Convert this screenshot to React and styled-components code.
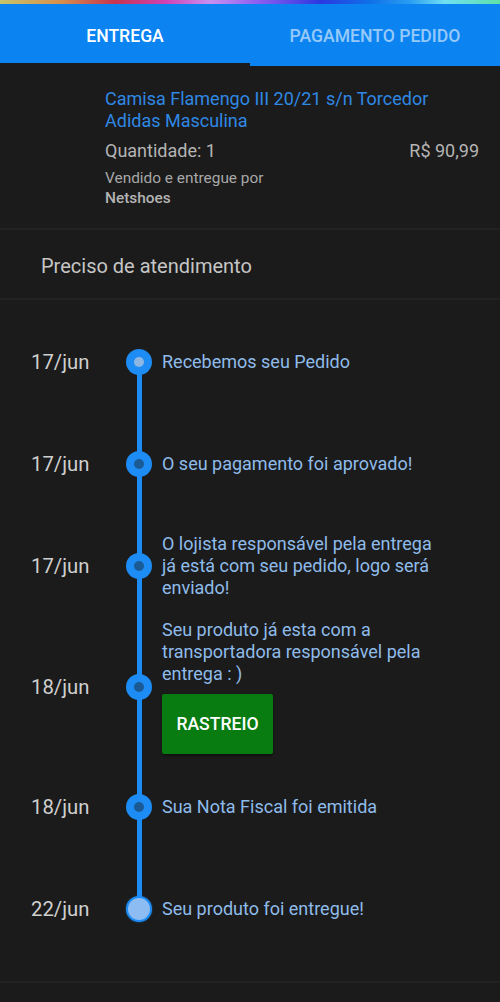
import React from 'react';
import styled, { createGlobalStyle } from 'styled-components';

const Global = createGlobalStyle`
  html, body { margin: 0; padding: 0; background: #1b1b1b; }
  body { font-family: Roboto, "Noto Sans", "Liberation Sans", sans-serif; -webkit-font-smoothing: antialiased; }
  * { box-sizing: border-box; }
`;

const Page = styled.div`
  width: 500px;
  min-height: 1002px;
  background: #1b1b1b;
  display: flex;
  flex-direction: column;
`;

const Rainbow = styled.div`
  height: 4px;
  background: linear-gradient(90deg, #c8c46c 0%, #d8904c 12%, #c8344e 23%, #d040b4 33%, #c890f2 42%, #8a5cf0 52%, #2a38e0 64%, #0f70e8 74%, #2a9ef2 82%, #70e0f2 89%, #5ee0a8 100%);
`;

const Tabs = styled.div`
  display: grid;
  grid-template-columns: 1fr 1fr;
  height: 62px;
  background: #0b84f2;
`;

const Tab = styled.div`
  display: flex;
  align-items: center;
  justify-content: center;
  padding-top: 2px;
  font-size: 17.6px;
  font-weight: 500;
  color: ${p => (p.$active ? '#ffffff' : 'rgba(255,255,255,0.58)')};
  box-shadow: ${p => (p.$active ? 'inset 0 -3px 0 #1b1b1b' : 'none')};
`;

const Section = styled.section`
  border-bottom: 2px solid #222222;
`;

const Product = styled(Section)`
  padding: 22px 21px 20px 105px;
  display: flex;
  flex-direction: column;
`;

const Title = styled.div`
  max-width: 350px;
  font-size: 18px;
  line-height: 22px;
  color: #2f88e4;
`;

const QtyRow = styled.div`
  display: flex;
  justify-content: space-between;
  margin-top: 8px;
  font-size: 18px;
  line-height: 22px;
  color: #b4b4b4;
`;

const Seller = styled.div`
  margin-top: 6px;
  font-size: 15.4px;
  line-height: 20px;
  color: #a8a8a8;
`;

const SellerName = styled.div`
  font-size: 15.4px;
  line-height: 20px;
  font-weight: 500;
  color: #b4b4b4;
`;

const Help = styled(Section)`
  height: 70px;
  display: flex;
  align-items: center;
  padding: 3px 0 0 41px;
  font-size: 20px;
  color: #c6c6c6;
`;

const Timeline = styled(Section)`
  padding: 11px 0 21px;
  display: flex;
  flex-direction: column;
`;

const Row = styled.div`
  display: grid;
  grid-template-columns: 126px 26px 1fr;
  min-height: 102px;
`;

const DateCell = styled.div`
  display: flex;
  align-items: center;
  padding-left: 31px;
  font-size: 20.3px;
  color: #cfcfcf;
`;

const lineBg = {
  first: 'center bottom / 5px 50%',
  middle: 'center / 5px 100%',
  last: 'center top / 5px 50%',
};

const NodeCell = styled.div`
  display: flex;
  align-items: center;
  justify-content: center;
  background: linear-gradient(#1e8cf5, #1e8cf5) no-repeat ${p => lineBg[p.$pos]};
`;

const Dot = styled.div`
  width: 26px;
  height: 26px;
  border-radius: 50%;
  display: flex;
  align-items: center;
  justify-content: center;
  background: ${p => (p.$kind === 'final' ? '#8cbcf2' : '#1e8cf5')};
  border: ${p => (p.$kind === 'final' ? '2px solid #1e8cf5' : 'none')};
  box-shadow: ${p => (p.$kind === 'final' ? '0 0 2px rgba(30,140,245,0.6)' : 'none')};
`;

const Inner = styled.div`
  width: 10px;
  height: 10px;
  border-radius: 50%;
  background: ${p => (p.$kind === 'first' ? '#8db7e2' : '#1a5b95')};
`;

const Content = styled.div`
  display: flex;
  flex-direction: column;
  justify-content: center;
  align-items: flex-start;
  padding: 2px 0 2px 10px;
`;

const EventText = styled.div`
  max-width: 285px;
  font-size: 18px;
  line-height: 22px;
  color: #8fbbea;
`;

const TrackButton = styled.button`
  margin-top: 9px;
  width: 111px;
  height: 60px;
  border: none;
  border-radius: 2px;
  background: #087c10;
  color: #ffffff;
  font-family: inherit;
  font-size: 17.6px;
  font-weight: 500;
  box-shadow: 0 2px 3px rgba(0,0,0,0.4);
`;

const events = [
  { date: '17/jun', text: 'Recebemos seu Pedido', kind: 'first' },
  { date: '17/jun', text: 'O seu pagamento foi aprovado!', kind: 'mid' },
  { date: '17/jun', text: 'O lojista responsável pela entrega já está com seu pedido, logo será enviado!', kind: 'mid' },
  { date: '18/jun', text: 'Seu produto já esta com a transportadora responsável pela entrega : )', kind: 'mid', button: true },
  { date: '18/jun', text: 'Sua Nota Fiscal foi emitida', kind: 'mid' },
  { date: '22/jun', text: 'Seu produto foi entregue!', kind: 'final' },
];

export default function App() {
  return (
    <Page>
      <Global />
      <Rainbow />
      <Tabs>
        <Tab $active>ENTREGA</Tab>
        <Tab>PAGAMENTO PEDIDO</Tab>
      </Tabs>
      <Product>
        <Title>Camisa Flamengo III 20/21 s/n Torcedor Adidas Masculina</Title>
        <QtyRow>
          <span>Quantidade: 1</span>
          <span>R$ 90,99</span>
        </QtyRow>
        <Seller>Vendido e entregue por</Seller>
        <SellerName>Netshoes</SellerName>
      </Product>
      <Help>Preciso de atendimento</Help>
      <Timeline>
        {events.map((e, i) => (
          <Row key={i}>
            <DateCell>{e.date}</DateCell>
            <NodeCell $pos={i === 0 ? 'first' : i === events.length - 1 ? 'last' : 'middle'}>
              <Dot $kind={e.kind}>{e.kind !== 'final' && <Inner $kind={e.kind} />}</Dot>
            </NodeCell>
            <Content>
              <EventText>{e.text}</EventText>
              {e.button && <TrackButton>RASTREIO</TrackButton>}
            </Content>
          </Row>
        ))}
      </Timeline>
    </Page>
  );
}
